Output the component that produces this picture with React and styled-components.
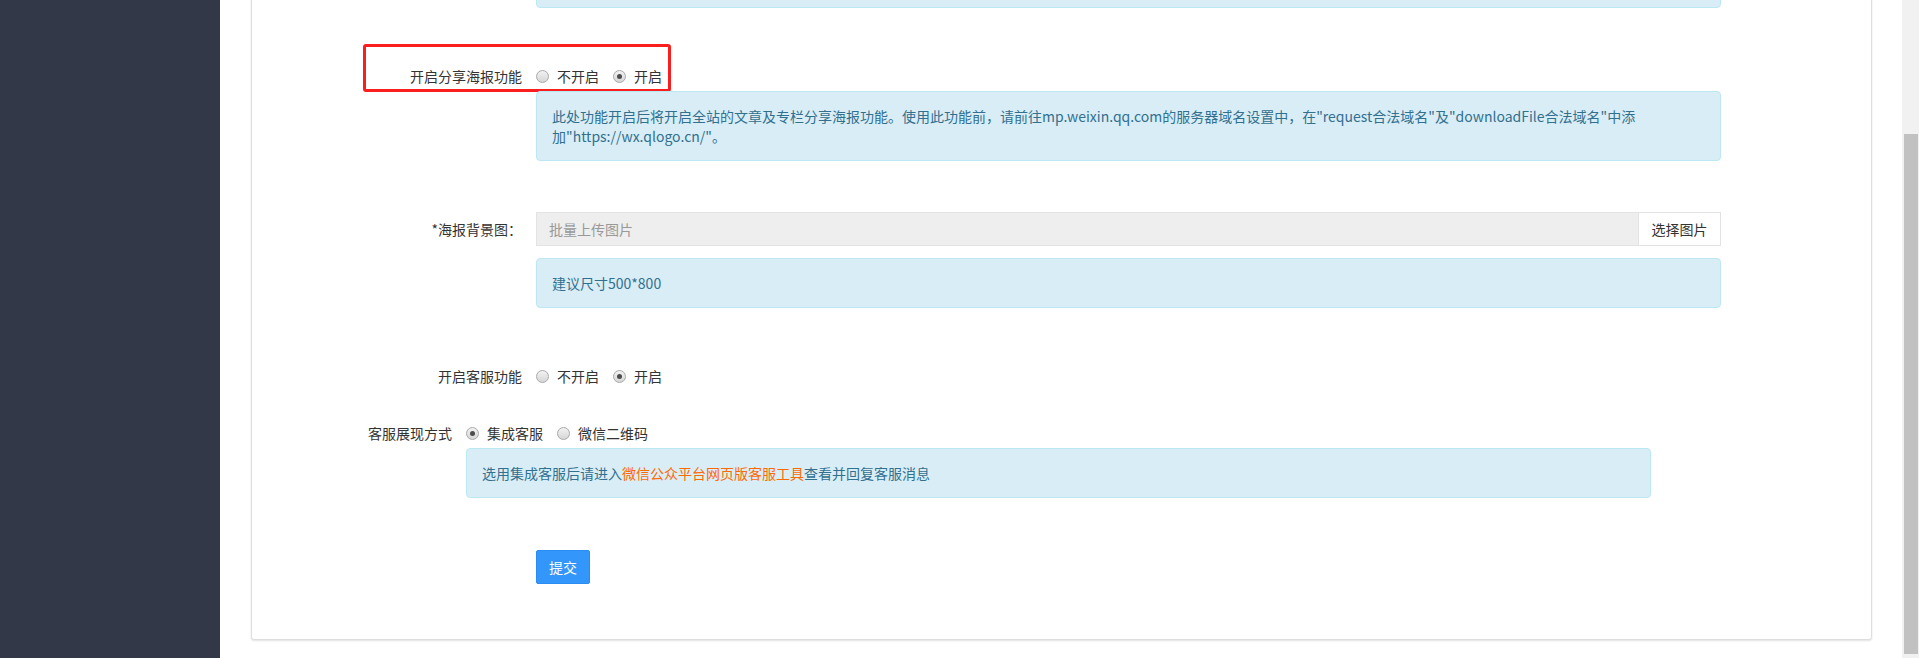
import React from 'react'
import styled, { createGlobalStyle } from 'styled-components'

const GlobalStyle = createGlobalStyle`
  html, body {
    margin: 0;
    padding: 0;
    overflow: hidden;
    background: #fff;
  }
  body {
    font-family: "Noto Sans CJK SC", "Noto Sans", sans-serif;
    font-size: 14px;
    color: #333;
  }
`

const Page = styled.div`
  display: flex;
  height: 658px;
  overflow: hidden;
`

const Sidebar = styled.aside`
  width: 220px;
  flex-shrink: 0;
  background: #333849;
`

const Main = styled.main`
  flex: 1;
  padding: 0 30px 0 31px;
  background: #fff;
  overflow: hidden;
`

const Card = styled.section`
  margin-top: -43px;
  padding-bottom: 55px;
  background: #fff;
  border: 1px solid #dedede;
  border-radius: 0 0 3px 3px;
  box-shadow: 0 1px 2px rgba(0, 0, 0, 0.12);
`

const Row = styled.div`
  position: relative;
  display: grid;
  grid-template-columns: ${p => p.$labelWidth || 270}px 1185px;
  column-gap: 14px;
  align-items: center;
  margin-top: ${p => p.$top || 0}px;
`

const Label = styled.label`
  text-align: right;
  line-height: 20px;
  color: #333;
  white-space: nowrap;
`

const Mark = styled.div`
  position: absolute;
  left: 111px;
  top: -22px;
  width: 302px;
  height: 42px;
  border: 3px solid #fb1e1e;
  border-radius: 3px;
  pointer-events: none;
`

const Alert = styled.div`
  min-height: 20px;
  padding: 14px 15px;
  line-height: 20px;
  color: #31708f;
  background: #d9edf7;
  border: 1px solid #bce8f1;
  border-radius: 4px;
`

const Highlight = styled.span`
  color: #ff6a00;
`

const Radios = styled.div`
  display: flex;
  align-items: center;
  gap: 14px;
  line-height: 20px;
`

const RadioItem = styled.label`
  display: inline-flex;
  align-items: center;
  gap: 8px;
  color: #333;
`

const RadioDot = styled.span`
  position: relative;
  width: 11px;
  height: 11px;
  border-radius: 50%;
  border: 1px solid #a9a9a9;
  background: linear-gradient(#f2f2f2, #d6d6d6);

  &::after {
    content: '';
    display: ${p => (p.$on ? 'block' : 'none')};
    position: absolute;
    left: 3px;
    top: 3px;
    width: 5px;
    height: 5px;
    border-radius: 50%;
    background: #4d4d4d;
  }
`

const Upload = styled.div`
  display: flex;
  height: 34px;
`

const FileInput = styled.div`
  flex: 1;
  display: flex;
  align-items: center;
  padding: 0 12px;
  background: #eee;
  border: 1px solid #e3e3e3;
  color: #999;
`

const PickButton = styled.button`
  width: 82px;
  padding: 0;
  font: inherit;
  color: #333;
  background: #fff;
  border: 1px solid #e3e3e3;
  border-left: none;
`

const Submit = styled.button`
  justify-self: start;
  height: 34px;
  padding: 6px 12px;
  font: inherit;
  line-height: 20px;
  color: #fff;
  background: #3396fa;
  border: 1px solid #2b8df2;
  border-radius: 2px;
`

const Scrollbar = styled.div`
  width: 17px;
  flex-shrink: 0;
  background: #f1f1f1;
  padding-top: 134px;
`

const Thumb = styled.div`
  height: 520px;
  margin: 0 1px 0 2px;
  background: #c1c1c1;
`

function Radio({ on, children }) {
  return (
    <RadioItem>
      <RadioDot $on={on} />
      {children}
    </RadioItem>
  )
}

export default function App() {
  return (
    <Page>
      <GlobalStyle />
      <Sidebar />
      <Main>
        <Card>
          <Row>
            <span />
            <Alert />
          </Row>

          <Row $top={58}>
            <Label>开启分享海报功能</Label>
            <Radios>
              <Radio>不开启</Radio>
              <Radio on>开启</Radio>
            </Radios>
            <Mark />
          </Row>
          <Row $top={5}>
            <span />
            <Alert>
              此处功能开启后将开启全站的文章及专栏分享海报功能。使用此功能前，请前往mp.weixin.qq.com的服务器域名设置中，在"request合法域名"及"downloadFile合法域名"中添
              <br />
              加"https://wx.qlogo.cn/"。
            </Alert>
          </Row>

          <Row $top={51}>
            <Label>*海报背景图：</Label>
            <Upload>
              <FileInput>批量上传图片</FileInput>
              <PickButton>选择图片</PickButton>
            </Upload>
          </Row>
          <Row $top={12}>
            <span />
            <Alert>建议尺寸500*800</Alert>
          </Row>

          <Row $top={58}>
            <Label>开启客服功能</Label>
            <Radios>
              <Radio>不开启</Radio>
              <Radio on>开启</Radio>
            </Radios>
          </Row>

          <Row $top={37} $labelWidth={200}>
            <Label>客服展现方式</Label>
            <Radios>
              <Radio on>集成客服</Radio>
              <Radio>微信二维码</Radio>
            </Radios>
          </Row>
          <Row $top={5} $labelWidth={200}>
            <span />
            <Alert>
              选用集成客服后请进入<Highlight>微信公众平台网页版客服工具</Highlight>查看并回复客服消息
            </Alert>
          </Row>

          <Row $top={52}>
            <span />
            <Submit>提交</Submit>
          </Row>
        </Card>
      </Main>
      <Scrollbar>
        <Thumb />
      </Scrollbar>
    </Page>
  )
}
